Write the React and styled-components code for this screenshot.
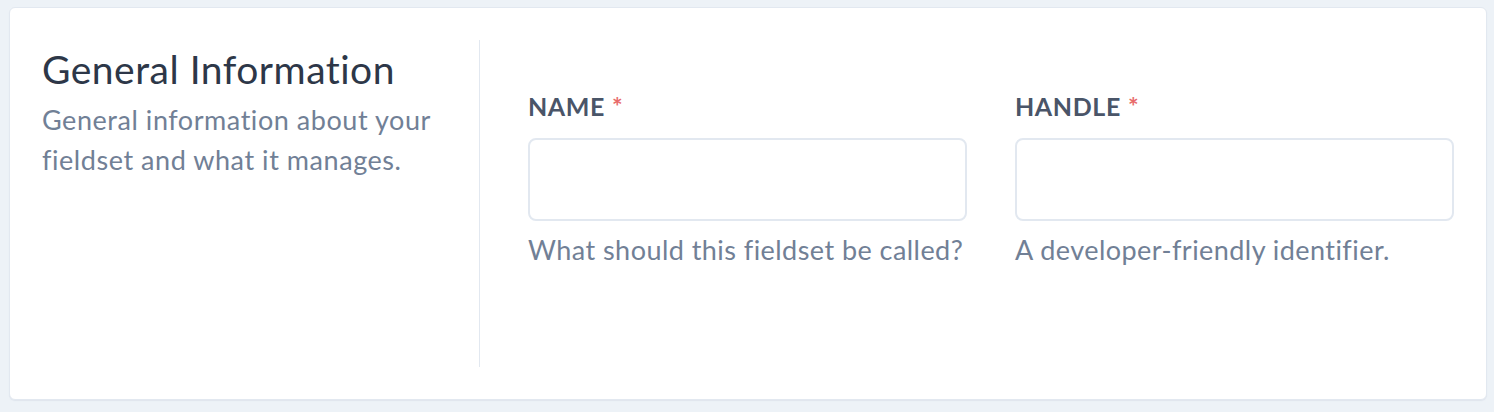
import React from 'react'
import styled, { createGlobalStyle } from 'styled-components'

const colors = {
	page: '#edf2f7',
	border: '#e2e8f0',
	title: '#2d3748',
	muted: '#718096',
	label: '#4a5568',
	required: '#e86a6a',
}

const GlobalStyle = createGlobalStyle`
	html, body {
		margin: 0;
		background: ${colors.page};
	}
	body {
		font-family: 'Lato', 'Noto Sans', sans-serif;
		-webkit-font-smoothing: antialiased;
	}
`

const Page = styled.div`
	padding: 7px 7px 11px 9px;
`

const Card = styled.section`
	display: flex;
	min-height: 327px;
	padding: 32px;
	background: #fff;
	border: 1px solid ${colors.border};
	border-radius: 6px;
	box-shadow: 0 1px 1px rgba(160, 174, 192, 0.18);
`

const Intro = styled.div`
	width: 437px;
	flex-shrink: 0;
	border-right: 1px solid ${colors.border};
`

const Title = styled.h2`
	margin: 5px 0 0;
	font-size: 39px;
	font-weight: 400;
	letter-spacing: 0.5px;
	line-height: 48px;
	color: ${colors.title};
`

const Description = styled.p`
	margin: 7px 0 0;
	font-size: 27px;
	letter-spacing: 0.55px;
	line-height: 40px;
	color: ${colors.muted};
	max-width: 400px;
`

const Fields = styled.div`
	flex: 1;
	display: grid;
	grid-template-columns: 1fr 1fr;
	column-gap: 48px;
	align-content: start;
	padding: 50px 0 0 48px;
`

const Field = styled.div`
	display: flex;
	flex-direction: column;
`

const Label = styled.label`
	font-size: 25px;
	font-weight: 700;
	line-height: 32px;
	letter-spacing: 0.6px;
	text-transform: uppercase;
	color: ${colors.label};
`

const Required = styled.span`
	margin-left: 7px;
	color: ${colors.required};
`

const Input = styled.input`
	box-sizing: border-box;
	height: 83px;
	margin-top: 16px;
	padding: 0 20px;
	border: 2px solid ${colors.border};
	border-radius: 8px;
	background: #fff;
	font: inherit;
	font-size: 26px;
	outline: none;
`

const Help = styled.p`
	margin: 9px 0 0;
	font-size: 27px;
	letter-spacing: 0.45px;
	line-height: 40px;
	color: ${colors.muted};
`

const fields = [
	{ name: 'name', label: 'Name', help: 'What should this fieldset be called?' },
	{ name: 'handle', label: 'Handle', help: 'A developer-friendly identifier.' },
]

export default function App() {
	return (
		<Page>
			<GlobalStyle />
			<Card>
				<Intro>
					<Title>General Information</Title>
					<Description>
						General information about your fieldset and what it manages.
					</Description>
				</Intro>
				<Fields>
					{fields.map((field) => (
						<Field key={field.name}>
							<Label htmlFor={field.name}>
								{field.label}
								<Required>*</Required>
							</Label>
							<Input id={field.name} type="text" />
							<Help>{field.help}</Help>
						</Field>
					))}
				</Fields>
			</Card>
		</Page>
	)
}
